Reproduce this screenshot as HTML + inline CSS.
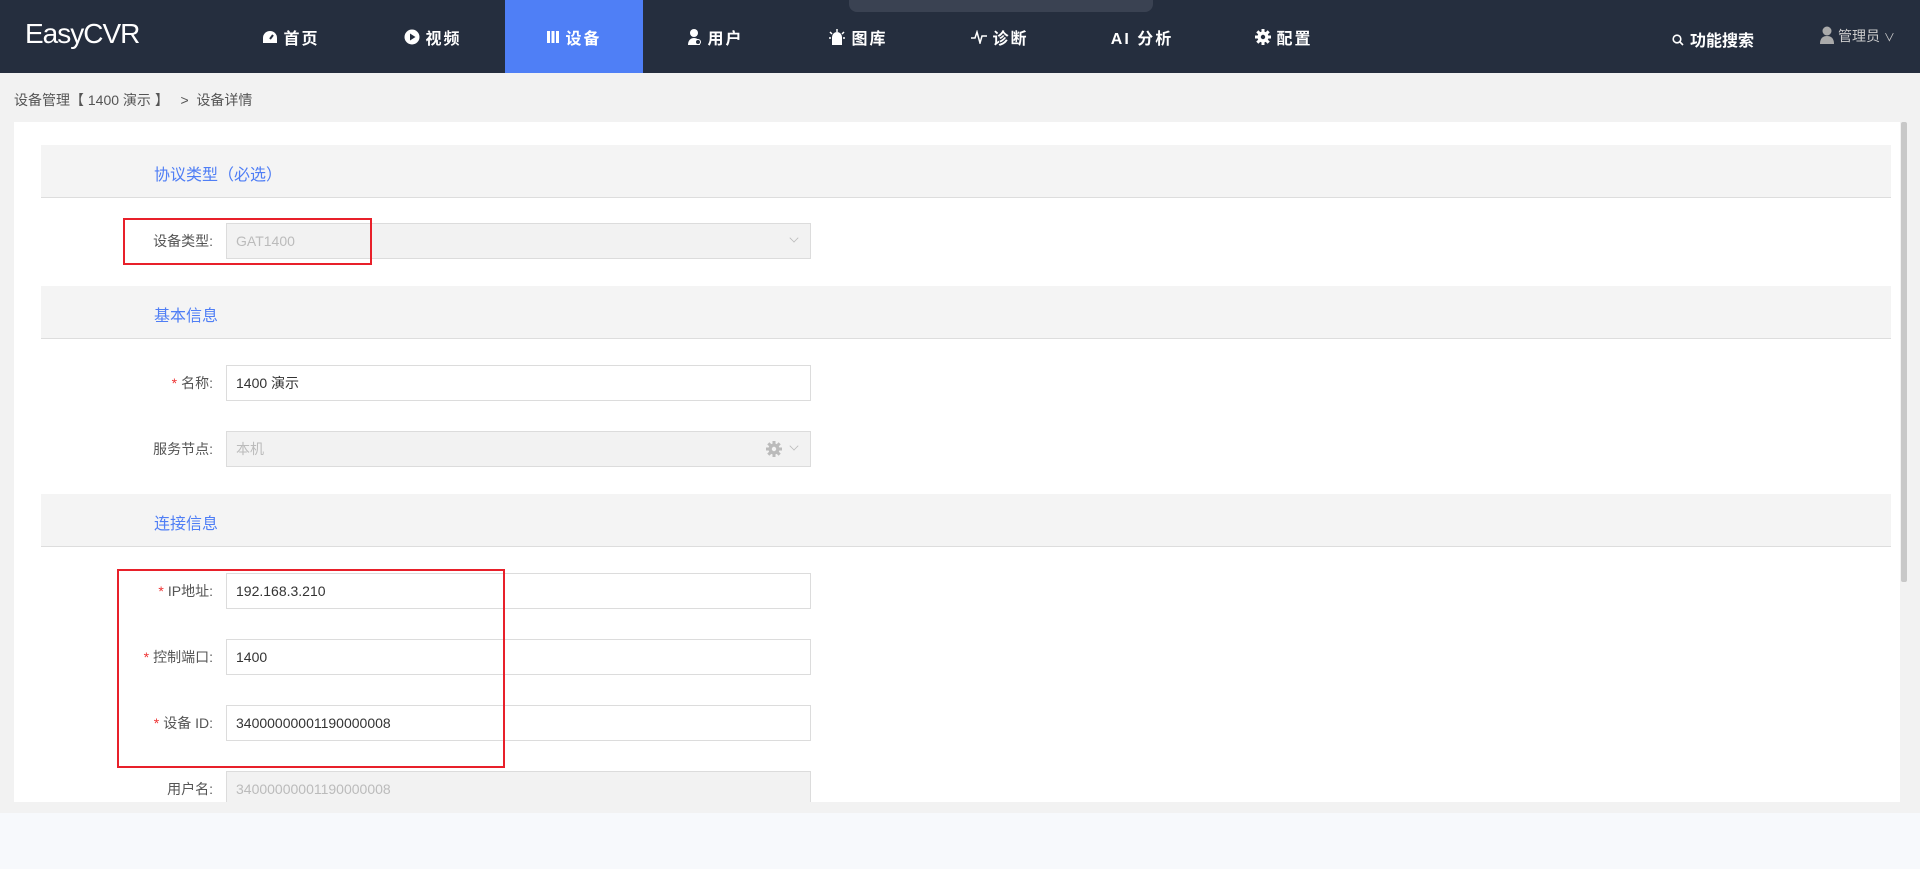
<!DOCTYPE html>
<html><head><meta charset="utf-8"><style>
*{margin:0;padding:0;box-sizing:border-box}
body{width:1920px;height:869px;overflow:hidden;background:#f7f9fc;font-family:"Liberation Sans","Noto Sans CJK SC",sans-serif;position:relative}
.hdr{position:absolute;left:0;top:0;width:1920px;height:73px;background:#252e3e}
.logo{position:absolute;left:25px;top:18px;color:#fff;font-size:28px;letter-spacing:-1px}
.nav{position:absolute;top:0;height:73px;width:140px;color:#fff;font-weight:bold;font-size:16px;display:flex;align-items:center;justify-content:center;letter-spacing:2px}
.nav.act{background:#4f7ff6}
.nav svg{margin-right:5px}
.pill{position:absolute;left:849px;top:-8px;width:304px;height:20px;border-radius:8px;background:#3a4252}
.grey{position:absolute;left:0;top:73px;width:1920px;height:740px;background:#f2f2f2}
.bc{position:absolute;left:14px;top:90px;font-size:14px;color:#555}
.card{position:absolute;left:14px;top:122px;width:1886px;height:680px;background:#fff;overflow:hidden}
.sb{position:absolute;left:1901px;top:122px;width:6px;height:460px;background:#c8c8c8;border-radius:2px}
.sec{position:absolute;left:27px;width:1850px;height:53px;background:#f4f4f4;border-bottom:1px solid #ddd}
.sec span{position:absolute;left:113px;top:16px;color:#4f7ef5;font-size:16px}
.lbl{position:absolute;width:199px;text-align:right;font-size:14px;color:#555;height:36px;line-height:36px}
.lbl i{color:#e33;font-style:normal;margin-right:4px}
.inp{position:absolute;left:212px;width:585px;height:36px;border:1px solid #dcdcdc;font-size:14px;color:#333;line-height:34px;padding-left:9px}
.inp.dis{background:#f2f2f2;color:#bbb}
.chev{position:absolute;right:12px;top:10px;width:8px;height:8px;border-right:1px solid #bbb;border-bottom:1px solid #bbb;transform:rotate(45deg) scale(.8)}
.red{position:absolute;border:2px solid #e8202a}
</style></head><body>
<div class="hdr">
<div class="pill"></div>
<div class="logo">EasyCVR</div>
<div class="nav" style="left:221px"><svg width="16" height="14" viewBox="0 0 16 14"><path d="M8 1a7 7 0 0 0-7 7v5h14V8a7 7 0 0 0-7-7z" fill="#fff"/><path d="M8 9L11 5" stroke="#252e3e" stroke-width="2"/></svg>首页</div>
<div class="nav" style="left:363px"><svg width="16" height="16" viewBox="0 0 16 16"><circle cx="8" cy="8" r="7.5" fill="#fff"/><path d="M6 4.5v7l5.5-3.5z" fill="#252e3e"/></svg>视频</div>
<div class="nav act" style="left:505px;width:138px"><svg width="14" height="14" viewBox="0 0 14 14"><rect x="1" y="1" width="3" height="12" fill="#fff"/><rect x="5.5" y="1" width="3" height="12" fill="#fff"/><rect x="10" y="1" width="3" height="12" fill="#fff"/></svg>设备</div>
<div class="nav" style="left:646px"><svg width="14" height="18" viewBox="0 0 14 18"><circle cx="6" cy="5" r="4" fill="#fff"/><path d="M0 17c0-5 3-7 6-7s6 2 6 7z" fill="#fff"/><circle cx="10" cy="14" r="2.5" fill="#252e3e" stroke="#fff"/></svg>用户</div>
<div class="nav" style="left:788px"><svg width="18" height="18" viewBox="0 0 18 18"><path d="M4 17V9a5 5 0 0 1 10 0v8z" fill="#fff"/><path d="M9 1v3M2 4l2 2M16 4l-2 2M1 10h2M15 10h2" stroke="#fff" stroke-width="1.5"/></svg>图库</div>
<div class="nav" style="left:930px"><svg width="16" height="14" viewBox="0 0 16 14"><path d="M0 8h4l2-6 3 11 2-7h5" fill="none" stroke="#fff" stroke-width="1.5"/></svg>诊断</div>
<div class="nav" style="left:1072px">AI 分析</div>
<div class="nav" style="left:1214px"><svg width="16" height="16" viewBox="0 0 16 16"><circle cx="8" cy="8" r="5.5" fill="#fff"/><g stroke="#fff" stroke-width="3"><path d="M8 0v16M0 8h16M2.3 2.3l11.4 11.4M13.7 2.3L2.3 13.7"/></g><circle cx="8" cy="8" r="2.2" fill="#252e3e"/></svg>配置</div>
<div style="position:absolute;left:1672px;top:27px;color:#fff;font-weight:bold;font-size:16px"><svg width="12" height="12" viewBox="0 0 12 12" style="margin-right:6px"><circle cx="5" cy="5" r="3.8" fill="none" stroke="#fff" stroke-width="1.6"/><path d="M8 8l3 3" stroke="#fff" stroke-width="1.6"/></svg>功能搜索</div>
<div style="position:absolute;left:1820px;top:26px;color:#ccc;font-size:14px"><svg width="14" height="18" viewBox="0 0 14 18" style="vertical-align:-3px;margin-right:4px"><circle cx="7" cy="5" r="4.5" fill="#aaa"/><path d="M0 18c0-6 3-8 7-8s7 2 7 8z" fill="#aaa"/></svg>管理员 <span style="font-size:11px">∨</span></div>
</div>
<div class="grey"></div>
<div class="bc">设备管理【 1400 演示 】&nbsp;&nbsp;&nbsp;&gt;&nbsp;&nbsp;设备详情</div>
<div class="card">
<div class="sec" style="top:23px"><span>协议类型（必选）</span></div>
<div class="lbl" style="top:101px">设备类型:</div>
<div class="inp dis" style="top:101px">GAT1400<div class="chev"></div></div>
<div class="sec" style="top:164px"><span>基本信息</span></div>
<div class="lbl" style="top:243px"><i>*</i>名称:</div>
<div class="inp" style="top:243px">1400 演示</div>
<div class="lbl" style="top:309px">服务节点:</div>
<div class="inp dis" style="top:309px">本机<svg width="16" height="16" viewBox="0 0 16 16" style="position:absolute;right:28px;top:9px"><circle cx="8" cy="8" r="5.5" fill="#bbb"/><g stroke="#bbb" stroke-width="3"><path d="M8 0v16M0 8h16M2.3 2.3l11.4 11.4M13.7 2.3L2.3 13.7"/></g><circle cx="8" cy="8" r="2.2" fill="#f2f2f2"/></svg><div class="chev"></div></div>
<div class="sec" style="top:372px"><span>连接信息</span></div>
<div class="lbl" style="top:451px"><i>*</i>IP地址:</div>
<div class="inp" style="top:451px">192.168.3.210</div>
<div class="lbl" style="top:517px"><i>*</i>控制端口:</div>
<div class="inp" style="top:517px">1400</div>
<div class="lbl" style="top:583px"><i>*</i>设备 ID:</div>
<div class="inp" style="top:583px">34000000001190000008</div>
<div class="lbl" style="top:649px">用户名:</div>
<div class="inp dis" style="top:649px">34000000001190000008</div>
</div>
<div class="sb"></div>
<div class="red" style="left:123px;top:218px;width:249px;height:47px"></div>
<div class="red" style="left:117px;top:569px;width:388px;height:199px"></div>
</body></html>
